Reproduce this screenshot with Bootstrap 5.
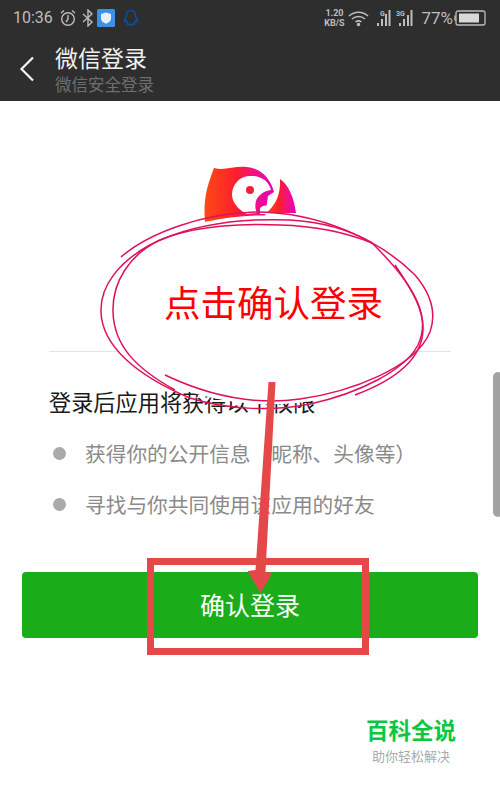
<!DOCTYPE html>
<html lang="zh-CN">
<head>
  <meta charset="UTF-8" />
  <meta name="viewport" content="width=device-width, initial-scale=1.0"/>
  <title>微信登录</title>
  <link href="https://cdn.jsdelivr.net/npm/bootstrap@5.3.0/dist/css/bootstrap.min.css" rel="stylesheet"/>
  <style>
    body { width: 500px; height: 790px; overflow: hidden; position: relative; background: #fff; font-family: "Noto Sans CJK SC", "Liberation Sans", sans-serif; }
    .top-head { height: 101px; background: #2e2e2e; }
    .status-row { height: 36px; padding: 0 14px 0 13px; color: #bdbdbd; }
    .clock { font: 16px/1 Roboto, sans-serif; width: 46px; }
    .speed { font: bold 9px/10px Roboto, sans-serif; text-align: center; width: 24px; }
    .percent { font: 17px/1 Roboto, sans-serif; }
    .title-row { padding-left: 19px; height: 65px; }
    .page-title { font-size: 23px; line-height: 30px; color: #f0f0f0; }
    .page-sub { font-size: 16.5px; line-height: 24px; color: #6e6e6e; }
    .shield-icon { margin-left: 2px; }
    .wifi-icon { margin-left: 1px; }
    .sig-one { margin-left: 6px; }
    .sig-two { margin-left: 5px; }
    .logo-box { height: 125px; padding-top: 64px; padding-left: 204px; }
    .line-sep { margin: 125px 49px 0; height: 1px; background: #e3e3e3; }
    .perm-head { margin: 34px 0 0 49px; font-size: 22.2px; line-height: 30px; color: #1a1a1a; }
    .perm-list { margin: 12px 0 0 53px; font-size: 20.7px; color: #8a8a8a; }
    .perm-item { height: 51px; }
    .dot-mark { width: 13px; height: 13px; border-radius: 50%; background: #aaa; margin-right: 19px; }
    .wx-btn { margin: 42px 22px 0; width: 456px; height: 66px; border-radius: 4px; background: #1aad19; color: #fff; font-size: 25px; border: 0; padding: 0; }
    .wx-btn:hover { background: #1aad19; color: #fff; }
    .side-grip { position: absolute; left: 493px; top: 372px; width: 10px; height: 145px; border-radius: 7px; background: #a3a3a3; }
    .mark-layer { position: absolute; left: 0; top: 0; }
    .mark-text { position: absolute; left: 164px; top: 275px; font-size: 36.5px; line-height: 54px; color: #f00; white-space: nowrap; }
    .water-mark { position: absolute; left: 341px; top: 714px; width: 140px; text-align: center; }
    .water-big { font-size: 22.5px; line-height: 30px; font-weight: 700; color: #08c840; }
    .water-small { font-size: 13px; line-height: 18px; color: #aaa; margin-top: 3px; }
  </style>
</head>
<body>
  <div class="top-head">
    <div class="status-row d-flex align-items-center">
      <span class="clock">10:36</span>
      <svg width="18" height="18" viewBox="0 0 18 18" fill="none" stroke="#bdbdbd" stroke-width="1.4"><circle cx="9" cy="10" r="6.3"/><path d="M9 6v4l-2 3M2 4l3-2.5M16 4l-3-2.5"/></svg>
      <svg class="ms-1" width="14" height="18" viewBox="0 0 14 18" fill="none" stroke="#bdbdbd" stroke-width="1.4"><path d="M2 5l9 8-4 4V1l4 4-9 8"/></svg>
      <svg class="shield-icon" width="18" height="18" viewBox="0 0 18 18"><rect width="18" height="18" rx="1.5" fill="#3d8fe8"/><path d="M9 3.5l5 1.6v4.2c0 2.8-2.2 4.5-5 5.4-2.8-.9-5-2.6-5-5.4V5.100z" fill="#e8f1fb"/></svg>
      <svg class="ms-2" width="16" height="18" viewBox="0 0 16 18" fill="none" stroke="#0c4fa8" stroke-width="1.4"><path d="M8 1.500c-3 0-4.500 2.300-4.500 5 0 1.500-2 3.500-2 5.500 0 1 1 .8 2 0 .3 1 1 1.700 1.500 2.200-1 .5-1 1.800 1 1.800 1 0 1.700-.3 2-.8.300.5 1 .8 2 .8 2 0 2-1.300 1-1.800.5-.5 1.200-1.200 1.500-2.200 1 .8 2 1 2-0 0-2-2-4-2-5.500 0-2.700-1.500-5-4.500-5z"/></svg>
      <div class="ms-auto d-flex align-items-center">
        <span class="speed">1.20<br>KB/S</span>
        <svg class="wifi-icon" width="24" height="18" viewBox="0 0 24 18" fill="none" stroke="#bdbdbd" stroke-width="1.5"><path d="M2 7c5.500-5 13.500-5 19 0M5 10c3.800-3.300 9.200-3.300 13 0M8.500 13c2-1.500 4-1.500 6 0"/><circle cx="11.500" cy="15.500" r="1" fill="#bdbdbd"/></svg>
        <svg class="sig-one" width="14" height="18" viewBox="0 0 14 18" fill="#bdbdbd"><rect x="0" y="14" width="2" height="3"/><rect x="4" y="10" width="2" height="7"/><rect x="8" y="5" width="2" height="12"/><rect x="11.500" y="1" width="2" height="16"/><text x="3" y="7" font-size="7" font-weight="700" font-family="Roboto, sans-serif">G</text></svg>
        <svg class="sig-two" width="17" height="18" viewBox="0 0 17 18" fill="#bdbdbd"><rect x="3" y="14" width="2" height="3"/><rect x="7" y="10" width="2" height="7"/><rect x="11" y="6" width="2" height="11"/><rect x="14.500" y="1" width="2" height="16"/><text x="0" y="7" font-size="7" font-weight="700" font-family="Roboto, sans-serif">3G</text></svg>
        <span class="percent ms-2">77%</span>
        <svg width="33" height="16" viewBox="0 0 33 16" fill="none"><path d="M2 5.500V10.500" stroke="#bdbdbd" stroke-width="1.500"/><rect x="3" y="1" width="29" height="14" rx="2" stroke="#bdbdbd" stroke-width="1.300"/><rect x="6" y="3.500" width="20" height="9" fill="#d8d8d8"/></svg>
      </div>
    </div>
    <div class="title-row d-flex align-items-center">
      <svg width="16" height="26" viewBox="0 0 16 26" fill="none" stroke="#f2f2f2" stroke-width="2.200"><path d="M14 1.500L2.500 13 14 24.500"/></svg>
      <div class="ms-3 ps-1">
        <div class="page-title">微信登录</div>
        <div class="page-sub">微信安全登录</div>
      </div>
    </div>
  </div>

  <div class="logo-box">
    <svg width="94" height="58" viewBox="204 165 94 58">
      <defs>
        <linearGradient id="parrotFill" x1="0" y1="0" x2="1" y2="0">
          <stop offset="0" stop-color="#fd4a14"/>
          <stop offset=".45" stop-color="#fb1f2c"/>
          <stop offset=".75" stop-color="#f00f8c"/>
          <stop offset="1" stop-color="#e800b8"/>
        </linearGradient>
      </defs>
      <path fill="url(#parrotFill)" d="M214 168c10 3 20-2 32-1 14 1 24 10 28 25l-6 4-3 20-60 6c-2-22 2-36 9-54z"/>
      <path fill="url(#parrotFill)" d="M280 179c9 6 14 19 16 34h-30c8-6 15-17 14-34z"/>
      <path fill="#fff" d="M250 176c10-1 19 5 21 14-7 1-13 5-15 11-1 4-1 8 1 12l-10 1c-5-2-15-10-15-19 0-11 8-19 18-19z"/>
      <circle cx="250" cy="190" r="4" fill="#f2203a"/>
      <path fill="#fff" d="M260 208c3-3 6-3 8-2l-1 8h-7z"/>
    </svg>
  </div>
  <div class="line-sep"></div>

  <div class="perm-head">登录后应用将获得以下权限</div>
  <div class="perm-list">
    <div class="perm-item d-flex align-items-center"><span class="dot-mark"></span><span>获得你的公开信息（昵称、头像等）</span></div>
    <div class="perm-item d-flex align-items-center"><span class="dot-mark"></span><span>寻找与你共同使用该应用的好友</span></div>
  </div>
  <button type="button" class="btn wx-btn d-block">确认登录</button>

  <div class="side-grip"></div>

  <svg class="mark-layer" width="500" height="790" viewBox="0 0 500 790" fill="none">
    <path fill="#fff" d="M205 222C250 212 300 212 345 232 395 250 430 280 432 310 433 345 390 380 330 397 280 410 220 405 170 385 125 365 98 335 100 310 102 270 150 235 205 222z"/>
    <g stroke="#e0105c" stroke-width="1.500">
      <path d="M121 257C150 232 205 213 255 212 320 212 380 240 415 275 432 295 436 315 430 332 415 368 350 392 300 399 250 406 205 394 165 375"/>
      <path d="M372 243C345 232 315 226 280 225 230 223 180 228 148 246 120 262 100 285 101 312 102 345 135 375 190 398 225 409 270 412 310 404 360 393 405 370 418 345 430 320 420 290 372 243"/>
      <path d="M372 243C350 230 325 222 290 220 240 218 195 225 160 240 130 254 112 282 113 312 114 345 135 368 175 390M355 395C395 380 422 360 423 330 424 310 412 290 395 265"/>
    </g>
    <path fill="#e54848" d="M268.500 382h7l-10 190 7 1-12 20-13-22 8-1z"/>
    <rect x="150.500" y="561.500" width="215" height="90" stroke="#e54848" stroke-width="7"/>
  </svg>
  <div class="mark-text">点击确认登录</div>

  <div class="water-mark">
    <div class="water-big">百科全说</div>
    <div class="water-small">助你轻松解决</div>
  </div>
</body>
</html>
